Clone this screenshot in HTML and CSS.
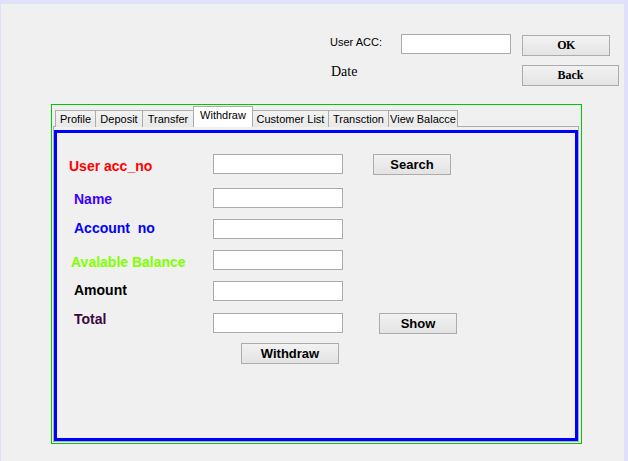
FILE: index.html
```html
<!DOCTYPE html>
<html>
<head>
<meta charset="utf-8">
<link rel="stylesheet" href="styles.css">
</head>
<body>
<div class="window">
  <div class="header">
    <span class="acc-label">User ACC:</span>
    <input class="field acc-field" type="text">
    <button class="tbtn ok">OK</button>
    <span class="date">Date</span>
    <span></span>
    <button class="tbtn back">Back</button>
  </div>

  <div class="frame">
    <div class="tabs">
      <div class="tab t-profile">Profile</div>
      <div class="tab t-deposit">Deposit</div>
      <div class="tab t-transfer">Transfer</div>
      <div class="tab sel t-withdraw">Withdraw</div>
      <div class="tab t-cust">Customer List</div>
      <div class="tab t-trans">Transction</div>
      <div class="tab t-view">View Balacce</div>
    </div>
    <div class="pane">
      <div class="blue">
        <div class="form">
          <div class="row r1">
            <span class="lbl l-user">User acc_no</span>
            <input class="field" type="text">
            <button class="btn search">Search</button>
          </div>
          <div class="row r2">
            <span class="lbl l-name">Name</span>
            <input class="field" type="text">
          </div>
          <div class="row r3">
            <span class="lbl l-acc">Account&nbsp; no</span>
            <input class="field" type="text">
          </div>
          <div class="row r4">
            <span class="lbl l-bal">Avalable Balance</span>
            <input class="field" type="text">
          </div>
          <div class="row r5">
            <span class="lbl l-amt">Amount</span>
            <input class="field" type="text">
          </div>
          <div class="row r6">
            <span class="lbl l-tot">Total</span>
            <input class="field" type="text">
            <button class="btn show">Show</button>
          </div>
          <div class="row r7">
            <button class="btn withdraw">Withdraw</button>
          </div>
        </div>
      </div>
    </div>
  </div>
</div>
</body>
</html>
```

FILE: styles.css
```css
html, body {
  margin: 0;
  padding: 0;
  background: #f0f0f0;
}

.window {
  width: 628px;
  height: 461px;
  box-sizing: border-box;
  border-top: 4px solid #e0e0fa;
  border-left: 1px solid #e0e0fa;
  border-right: 4px solid #e0e0fa;
  background: #f0f0f0;
  font-family: "Liberation Sans", Arial, sans-serif;
  overflow: hidden;
}

/* ---------- inputs ---------- */
.field {
  width: 130px;
  height: 20px;
  box-sizing: border-box;
  border: 1px solid #ababab;
  background: #fff;
  padding: 0;
  margin: 0;
  outline: none;
}

/* ---------- header ---------- */
.header {
  display: grid;
  grid-template-columns: 71px 121px 97px;
  grid-template-rows: 22px 21px;
  row-gap: 9px;
  margin-left: 329px;
  padding-top: 30px;
}

.acc-label {
  font-size: 11px;
  color: #000;
  align-self: start;
  margin-top: 2px;
}

.header .acc-field {
  width: 110px;
}

.date {
  font-family: "Liberation Serif", "Times New Roman", serif;
  font-size: 14px;
  color: #000;
  align-self: start;
  margin-top: -1px;
  padding-left: 1px;
}

.tbtn {
  height: 21px;
  box-sizing: border-box;
  border: 1px solid #acacac;
  background: linear-gradient(#f2f2f2, #e4e4e4);
  font-family: "Liberation Serif", "Times New Roman", serif;
  font-weight: bold;
  font-size: 12px;
  color: #000;
  padding: 0;
  border-radius: 0;
}

.ok {
  width: 88px;
  margin-top: 1px;
  letter-spacing: -0.5px;
}

.back {
  width: 97px;
}

/* ---------- tabbed frame ---------- */
.frame {
  margin-left: 50px;
  margin-top: 18px;
  width: 531px;
  height: 340px;
  box-sizing: border-box;
  border: 1px solid #00c800;
  padding: 1px 2px 1px 1px;
  display: flex;
  flex-direction: column;
}

.tabs {
  display: flex;
  align-items: flex-end;
  height: 21px;
  margin-bottom: -1px;
  padding-left: 2px;
  position: relative;
  z-index: 1;
}

.tab {
  height: 17px;
  box-sizing: border-box;
  border: 1px solid #acacac;
  border-bottom: none;
  background: linear-gradient(#f2f2f2, #e9e9e9);
  font-size: 11px;
  line-height: 16px;
  text-align: center;
  color: #000;
  margin-left: -1px;
}

.tab:first-child {
  margin-left: 0;
}

.tab.sel {
  height: 21px;
  background: #fff;
  line-height: 16px;
  padding-bottom: 4px;
}

.t-profile { width: 41px; }
.t-deposit { width: 48px; }
.t-transfer { width: 52px; }
.t-withdraw { width: 60px; }
.t-cust { width: 77px; }
.t-trans { width: 61px; }
.t-view { width: 70px; }

.pane {
  flex: 1;
  box-sizing: border-box;
  border: 1px solid #acacac;
  padding-top: 3px;
  display: flex;
  flex-direction: column;
}

.blue {
  flex: 1;
  box-sizing: border-box;
  border: 3px solid #0000ff;
}

/* ---------- form ---------- */
.form {
  padding: 21px 0 0 12px;
}

.row {
  display: flex;
  align-items: flex-start;
}

.r2 { margin-top: 13px; }
.r3 { margin-top: 11px; }
.r4 { margin-top: 11px; }
.r5 { margin-top: 11px; }
.r6 { margin-top: 12px; }
.r7 { margin-top: 9px; }

.lbl {
  width: 144px;
  box-sizing: border-box;
  font-size: 14px;
  font-weight: bold;
  line-height: 16px;
  padding-left: 5px;
}

.l-user { color: #ff0000; padding-left: 0; margin-top: 4px; }
.l-name { color: #3c00ff; margin-top: 3px; }
.l-acc { color: #0000ff; margin-top: 1px; }
.l-bal { color: #80ff00; padding-left: 2px; margin-top: 4px; }
.l-amt { color: #000; margin-top: 1px; }
.l-tot { color: #3a0a40; margin-top: -2px; }

.btn {
  width: 78px;
  height: 21px;
  box-sizing: border-box;
  border: 1px solid #acacac;
  background: linear-gradient(#f2f2f2, #e3e3e3);
  font-family: "Liberation Sans", Arial, sans-serif;
  font-weight: bold;
  font-size: 13px;
  color: #000;
  padding: 0;
  border-radius: 0;
}

.search { margin-left: 30px; }
.show { margin-left: 36px; }
.withdraw { margin-left: 172px; width: 98px; }
```
